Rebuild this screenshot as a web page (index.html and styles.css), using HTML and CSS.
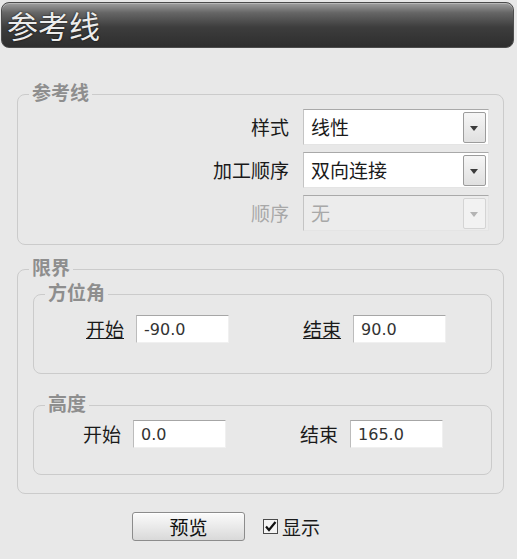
FILE: index.html
```html
<!DOCTYPE html>
<html lang="zh-CN">
<head>
	<meta charset="UTF-8">
	<meta name="viewport" content="width=device-width">
	<title>参考线</title>
	<link rel="stylesheet" href="styles.css">
</head>
<body>
<div class="titlebar">参考线</div>

<!-- reference line -->
<fieldset class="group group-ref">
	<legend>参考线</legend>
	<div class="form-grid">
		<label>样式</label>
		<div class="combo"><span class="combo-value">线性</span><span class="combo-arrow"></span></div>
		<label>加工顺序</label>
		<div class="combo"><span class="combo-value">双向连接</span><span class="combo-arrow"></span></div>
		<label class="off">顺序</label>
		<div class="combo combo-off"><span class="combo-value">无</span><span class="combo-arrow"></span></div>
	</div>
</fieldset>

<!-- limits -->
<fieldset class="group group-limit">
	<legend>限界</legend>
	<fieldset class="group sub sub-azimuth">
		<legend>方位角</legend>
		<div class="range">
			<label><u>开始</u></label>
			<input type="text" value="-90.0">
			<label class="end"><u>结束</u></label>
			<input type="text" value="90.0">
		</div>
	</fieldset>
	<fieldset class="group sub sub-height">
		<legend>高度</legend>
		<div class="range">
			<label>开始</label>
			<input type="text" value="0.0">
			<label class="end">结束</label>
			<input type="text" value="165.0">
		</div>
	</fieldset>
</fieldset>

<div class="actions">
	<button class="btn">预览</button>
	<label class="check">
		<svg width="15" height="15" viewBox="0 0 15 15">
			<rect x="0.5" y="0.5" width="14" height="14" fill="#f4f4f4" stroke="#4a4a4a"/>
			<path d="M3 7.5 L6 11 L12.5 3" fill="none" stroke="#111" stroke-width="2.2"/>
		</svg>
		显示
	</label>
</div>
</body>
</html>
```

FILE: styles.css
```css
*{box-sizing:border-box;}
body{margin:0;background-color:#e8e8e8;color:#1a1a1a;font-family:"Noto Sans CJK SC","Noto Sans",sans-serif;font-size:19px;line-height:20px;}

.titlebar{
	margin:2px 3px 0 1px;height:46px;padding-left:5px;
	line-height:44px;font-size:31px;color:#ececec;
	text-shadow:0 0 2px #000;
	border:1px solid #4c4c4c;border-radius:8px;
	background:linear-gradient(#a0a0a0 0%,#666 22%,#3d3d3d 55%,#2e2e2e 100%);
	box-shadow:inset 0 1px 0 #b8b8b8;
}

.group{margin:0 13px 0 17px;padding:3px 14px 13px 15px;border:1px solid #cbcbcb;border-radius:8px;min-width:0;}
.group legend{padding:0 3px 4px;margin-left:-4px;font-weight:bold;color:#8e8e8e;}
.group-ref{margin-top:34px;}
.group-limit{margin-top:12px;padding:1px 11px 18px 15px;}
.sub{margin:0;}
.sub-azimuth{padding-top:9px;padding-bottom:30px;}
.sub-height{margin-top:19px;padding-top:3px;padding-bottom:26px;}

.form-grid{display:grid;grid-template-columns:auto 186px;justify-content:end;align-items:center;column-gap:14px;row-gap:7px;}
.form-grid label{text-align:right;}
.form-grid .off{color:#a8a8a8;}

.combo{display:flex;align-items:center;height:36px;padding:0 2px 0 7px;background-color:#fff;border:1px solid;border-color:#a9a9a9 #e4e4e4 #e4e4e4 #c4c4c4;}
.combo-value{flex:1;}
.combo-arrow{position:relative;width:23px;height:31px;border:1px solid #9c9c9c;border-radius:2px;background:linear-gradient(#f6f6f6,#e0e0e0);}
.combo-arrow::after{content:"";position:absolute;left:6px;top:13px;border:4px solid transparent;border-top:5px solid #3c3c3c;border-bottom:0;}
.combo-off{background-color:#ececec;color:#a8a8a8;}
.combo-off .combo-arrow{border-color:#d4d4d4;background:#f2f2f2;}
.combo-off .combo-arrow::after{border-top-color:#b4b4b4;}

.range{display:flex;align-items:center;gap:12px;padding-left:37px;}
.sub-height .range{padding-left:34px;}
.range .end{margin-left:62px;}
.range input{
	width:93px;height:28px;padding:0 0 0 7px;margin:0;
	font-family:"DejaVu Sans",sans-serif;font-size:16px;color:#333;
	background-color:#fff;outline:none;
	border:1px solid;border-color:#a6a6a6 #f0f0f0 #f0f0f0 #bcbcbc;
}

.actions{display:flex;align-items:center;gap:18px;margin-top:18px;padding-left:132px;}
.btn{
	width:113px;height:29px;padding:0;
	font-family:inherit;font-size:19px;color:#111;
	border:1px solid #8c8c8c;border-radius:3px;
	background:linear-gradient(#fbfbfb,#d9d9d9);
	box-shadow:inset 0 1px 0 #fff;
}
.check{display:flex;align-items:center;gap:4px;}
```
